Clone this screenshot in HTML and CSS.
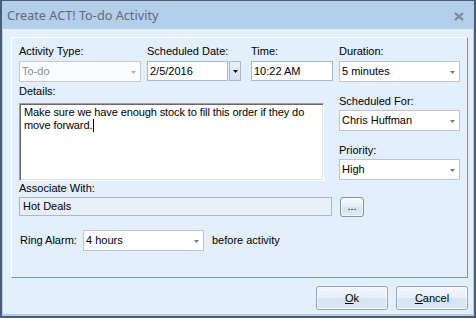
FILE: index.html
```html
<!DOCTYPE html>
<html>
<head>
<meta charset="utf-8">
<link rel="stylesheet" href="styles.css">
</head>
<body>
<div class="window">
  <div class="titlebar">
    <span class="title">Create ACT! To-do Activity</span>
    <svg class="close" width="10" height="9" viewBox="0 0 10 9"><path d="M1 1 L9 8 M9 1 L1 8" stroke="#7c8797" stroke-width="2.2" fill="none"/></svg>
  </div>
  <div class="body">
    <div class="panel">
      <div class="row1">
        <div class="field f-type">
          <div class="lbl">Activity Type:</div>
          <div class="combo disabled"><span>To-do</span><svg class="arrow" width="5" height="3" viewBox="0 0 5 3"><path d="M0 0H5L2.5 3Z" fill="#b9a8bc"/></svg></div>
        </div>
        <div class="field f-date">
          <div class="lbl">Scheduled Date:</div>
          <div class="datebox">
            <div class="text date">2/5/2016</div>
            <div class="dbtn"><svg width="5" height="3" viewBox="0 0 5 3"><path d="M0 0H5L2.5 3Z" fill="#000"/></svg></div>
          </div>
        </div>
        <div class="field f-time">
          <div class="lbl">Time:</div>
          <div class="text">10:22 AM</div>
        </div>
        <div class="field f-dur">
          <div class="lbl">Duration:</div>
          <div class="combo"><span>5 minutes</span><svg class="arrow" width="5" height="3" viewBox="0 0 5 3"><path d="M0 0H5L2.5 3Z" fill="#6d7b8e"/></svg></div>
        </div>
      </div>
      <div class="mid">
        <div class="leftcol">
          <div class="lbl details-lbl">Details:</div>
          <div class="details">Make sure we have enough stock to fill this order if they do move forward.<span class="caret"></span></div>
        </div>
        <div class="rightcol">
          <div class="lbl rlbl">Scheduled For:</div>
          <div class="combo"><span>Chris Huffman</span><svg class="arrow" width="5" height="3" viewBox="0 0 5 3"><path d="M0 0H5L2.5 3Z" fill="#6d7b8e"/></svg></div>
          <div class="lbl rlbl">Priority:</div>
          <div class="combo"><span>High</span><svg class="arrow" width="5" height="3" viewBox="0 0 5 3"><path d="M0 0H5L2.5 3Z" fill="#6d7b8e"/></svg></div>
        </div>
      </div>
      <div class="lbl assoc-lbl">Associate With:</div>
      <div class="assoc-row">
        <div class="assoc">Hot Deals</div>
        <div class="dots">...</div>
      </div>
      <div class="ring-row">
        <span class="ring-lbl">Ring Alarm:</span>
        <div class="combo ring"><span>4 hours</span><svg class="arrow" width="5" height="3" viewBox="0 0 5 3"><path d="M0 0H5L2.5 3Z" fill="#6d7b8e"/></svg></div>
        <span class="before">before activity</span>
      </div>
    </div>
    <div class="buttons">
      <div class="btn"><u>O</u>k</div>
      <div class="btn"><u>C</u>ancel</div>
    </div>
  </div>
</div>
</body>
</html>
```
FILE: styles.css
```css
* { box-sizing: border-box; }
html, body { margin: 0; padding: 0; }
body {
  font-family: "Liberation Sans", Arial, sans-serif;
  font-size: 11px;
  line-height: 13px;
  color: #000;
  background: #e3effd;
}
.window {
  width: 476px;
  height: 318px;
  border: 2px solid #4b5c73;
  border-top-width: 1px;
  background: #b3cee9;
  display: flex;
  flex-direction: column;
}
.titlebar {
  height: 28px;
  flex: none;
  display: flex;
  align-items: center;
  justify-content: space-between;
  padding: 1px 10px 0 5px;
}
.title {
  font-family: "Noto Sans", "Open Sans", sans-serif;
  font-size: 12.7px;
  color: #5f6978;
}
.close { display: block; margin-top: 1px; }
.body {
  flex: 1;
  margin: 0 1px 2px;
  background: #e3effd;
  display: flex;
  flex-direction: column;
  padding: 8px 5px 4px 8px;
}
.panel {
  height: 241px;
  border: 1px solid;
  border-color: #ffffff #6f95bd #6f95bd #ffffff;
  padding: 7px 0 0 7px;
}
.lbl { height: 13px; white-space: nowrap; }
.row1 { display: flex; }
.field .lbl { margin-bottom: 3px; }
.f-type { width: 122px; }
.f-date { width: 94px; margin-left: 6px; }
.f-time { width: 82px; margin-left: 10px; }
.f-dur { width: 121px; margin-left: 6px; }
.combo {
  height: 21px;
  border: 1px solid #bcc6d2;
  background: #fff;
  display: flex;
  align-items: center;
  padding: 0 4px 0 2px;
  white-space: nowrap;
}
.combo .arrow { margin-left: auto; display: block; margin-top: 1px; }
.combo.disabled { border-color: #cacaca; background: #fafbfc; color: #8e8e8e; }
.text {
  height: 20px;
  border: 1px solid #a9b9cd;
  background: #fff;
  padding: 0 2px;
  display: flex;
  align-items: center;
  white-space: nowrap;
}
.datebox { display: flex; }
.date { width: 81px; }
.dbtn {
  width: 12px;
  height: 20px;
  margin-left: 1px;
  border: 1px solid #a9b9cd;
  background: linear-gradient(#e9f1fb, #d4e2f2);
  display: flex;
  align-items: center;
  justify-content: center;
}
.mid { display: flex; }
.leftcol { width: 313px; }
.details-lbl { margin-top: 3px; margin-bottom: 5px; }
.details {
  width: 305px;
  height: 78px;
  background: #fff;
  border: 1px solid;
  border-color: #a0a0a0 #ffffff #ffffff #a0a0a0;
  box-shadow: inset 1px 1px 0 #696969, inset -1px -1px 0 #e3e3e3;
  padding: 2px 4px 0 4px;
  line-height: 13px;
  letter-spacing: -0.1px;
}
.caret {
  display: inline-block;
  width: 1px;
  height: 13px;
  background: #000;
  vertical-align: top;
  margin-left: 1px;
}
.rightcol { width: 121px; margin-left: 7px; }
.rlbl { margin-top: 13px; margin-bottom: 2px; }
.assoc-lbl { margin-top: 1px; margin-bottom: 2px; }
.assoc-row { display: flex; }
.assoc {
  width: 313px;
  height: 19px;
  border: 1px solid #a9b7c8;
  background: #e9eff7;
  padding: 0 3px;
  display: flex;
  align-items: center;
}
.dots {
  width: 24px;
  height: 20px;
  margin-left: 8px;
  border: 1px solid #7d91ab;
  border-radius: 3px;
  background: linear-gradient(#f8fbfe, #e3ecf7 50%, #d6e3f2 51%, #e0eaf6);
  text-align: center;
  line-height: 17px;
  box-shadow: inset 0 0 0 1px rgba(255,255,255,0.7);
}
.ring-row {
  display: flex;
  align-items: center;
  margin-top: 13px;
}
.ring-lbl { width: 64px; padding-left: 1px; }
.ring { width: 121px; }
.before { margin-left: 8px; }
.buttons {
  margin-top: 8px;
  display: flex;
  justify-content: flex-end;
  gap: 8px;
}
.btn {
  width: 72px;
  height: 24px;
  border: 1px solid #8fa3bd;
  border-radius: 3px;
  background: linear-gradient(#f4f8fd, #e6eef8 48%, #d5e2f1 52%, #dfe9f5);
  box-shadow: inset 0 0 0 1px rgba(255,255,255,0.75);
  display: flex;
  align-items: center;
  justify-content: center;
}
.btn u { text-decoration: underline; text-underline-offset: 1px; }
```
